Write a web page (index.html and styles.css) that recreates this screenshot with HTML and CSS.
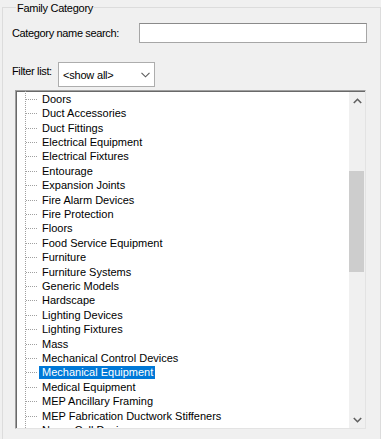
FILE: index.html
```html
<!DOCTYPE html>
<html>
<head>
<meta charset="utf-8">
<link rel="stylesheet" href="styles.css">
</head>
<body>
<fieldset class="group">
  <legend class="group-title">Family Category</legend>
  <div class="row search-row">
    <label class="label">Category name search:</label>
    <div class="textbox"></div>
  </div>
  <div class="row filter-row">
    <label class="label filter-label">Filter list:</label>
    <div class="combo">
      <span class="combo-text">&lt;show all&gt;</span>
      <svg class="combo-arrow" width="9" height="6" viewBox="0 0 9 6"><path d="M0.5 0.8 L4.5 4.8 L8.5 0.8" fill="none" stroke="#5a5a5a" stroke-width="1.1"/></svg>
    </div>
  </div>
  <div class="tree">
    <ul class="items">
      <li class="item"><span class="text">Doors</span></li>
      <li class="item"><span class="text">Duct Accessories</span></li>
      <li class="item"><span class="text">Duct Fittings</span></li>
      <li class="item"><span class="text">Electrical Equipment</span></li>
      <li class="item"><span class="text">Electrical Fixtures</span></li>
      <li class="item"><span class="text">Entourage</span></li>
      <li class="item"><span class="text">Expansion Joints</span></li>
      <li class="item"><span class="text">Fire Alarm Devices</span></li>
      <li class="item"><span class="text">Fire Protection</span></li>
      <li class="item"><span class="text">Floors</span></li>
      <li class="item"><span class="text">Food Service Equipment</span></li>
      <li class="item"><span class="text">Furniture</span></li>
      <li class="item"><span class="text">Furniture Systems</span></li>
      <li class="item"><span class="text">Generic Models</span></li>
      <li class="item"><span class="text">Hardscape</span></li>
      <li class="item"><span class="text">Lighting Devices</span></li>
      <li class="item"><span class="text">Lighting Fixtures</span></li>
      <li class="item"><span class="text">Mass</span></li>
      <li class="item"><span class="text">Mechanical Control Devices</span></li>
      <li class="item selected"><span class="text">Mechanical Equipment</span></li>
      <li class="item"><span class="text">Medical Equipment</span></li>
      <li class="item"><span class="text">MEP Ancillary Framing</span></li>
      <li class="item"><span class="text">MEP Fabrication Ductwork Stiffeners</span></li>
      <li class="item"><span class="text">Nurse Call Devices</span></li>
    </ul>
    <div class="scrollbar">
      <div class="sb-btn">
        <svg width="9" height="6" viewBox="0 0 9 6"><path d="M0.8 5 L4.5 1.3 L8.2 5" fill="none" stroke="#606060" stroke-width="1.6"/></svg>
      </div>
      <div class="sb-track">
        <div class="sb-thumb"></div>
      </div>
      <div class="sb-btn">
        <svg width="9" height="6" viewBox="0 0 9 6"><path d="M0.8 1 L4.5 4.7 L8.2 1" fill="none" stroke="#606060" stroke-width="1.6"/></svg>
      </div>
    </div>
  </div>
</fieldset>
</body>
</html>
```

FILE: styles.css
```css
html, body {
  margin: 0;
  padding: 0;
  background: #f0f0f0;
  overflow: hidden;
  width: 381px;
  height: 439px;
}

body {
  font-family: "Liberation Sans", Arial, sans-serif;
  font-size: 11px;
  color: #000;
}

.group {
  margin: -1px 0 0 2px;
  width: 379px;
  height: 460px;
  box-sizing: border-box;
  border: 1px solid #dcdcdc;
  padding: 8px 0 0 9px;
  min-width: 0;
}

.group-title {
  padding: 2px 1px 0;
  margin-left: 4px;
  font-size: 11px;
  line-height: 14px;
  letter-spacing: -0.27px;
  color: #000;
}

.row {
  display: flex;
  align-items: center;
}

.search-row {
  height: 20px;
}

.label {
  white-space: nowrap;
  letter-spacing: -0.35px;
}

.textbox {
  margin-left: auto;
  margin-right: 13px;
  width: 228px;
  height: 20px;
  box-sizing: border-box;
  background: #fff;
  border: 1px solid #a6a6a6;
  border-top-color: #8a8a8a;
}

.filter-row {
  margin-top: 19px;
  align-items: flex-start;
}

.filter-label {
  margin-top: 2px;
  line-height: 14px;
  width: 45px;
  flex: none;
}

.combo {
  margin-left: 1px;
  width: 97px;
  height: 25px;
  flex: none;
  box-sizing: border-box;
  background: #fff;
  border: 1px solid #adadad;
  display: flex;
  align-items: center;
  padding: 0 0 0 4px;
}

.combo-text {
  flex: 1;
  padding-top: 1px;
  letter-spacing: -0.2px;
}

.combo-arrow {
  margin-right: 4px;
  margin-top: 1px;
}

.tree {
  margin: 3px 0 0 3px;
  width: 351px;
  height: 339px;
  box-sizing: border-box;
  background: #fff;
  border-top: 1px solid #a0a0a0;
  border-left: 1px solid #a0a0a0;
  border-right: 1px solid #e3e3e3;
  border-bottom: 1px solid #e3e3e3;
  box-shadow: inset 1px 1px 0 #696969;
  display: flex;
  overflow: hidden;
}

.items {
  list-style: none;
  margin: 0;
  padding: 1px 0 0 0;
  flex: 1;
  overflow: hidden;
  background-image: repeating-linear-gradient(to bottom, #a0a0a0 0 1px, transparent 1px 2px);
  background-size: 1px 100%;
  background-position: 9px 0;
  background-repeat: no-repeat;
}

.item {
  height: 14.42px;
  display: flex;
  align-items: center;
  padding-left: 10px;
  white-space: nowrap;
}

.item::before {
  content: "";
  flex: none;
  width: 12px;
  height: 1px;
  margin-right: 1px;
  background-image: repeating-linear-gradient(to right, #a0a0a0 0 1px, transparent 1px 2px);
}

.text {
  display: inline-block;
  line-height: 13px;
  padding: 0 2px 0 3px;
}

.selected .text {
  background: #0078d7;
  color: #fff;
}

.scrollbar {
  flex: none;
  width: 16px;
  margin-top: 1px;
  background: #f0f0f0;
  display: flex;
  flex-direction: column;
}

.sb-btn {
  height: 17px;
  display: flex;
  align-items: center;
  justify-content: center;
}

.sb-track {
  flex: 1;
  padding-top: 62px;
}

.sb-thumb {
  width: 15px;
  height: 101px;
  background: #cdcdcd;
}
```
